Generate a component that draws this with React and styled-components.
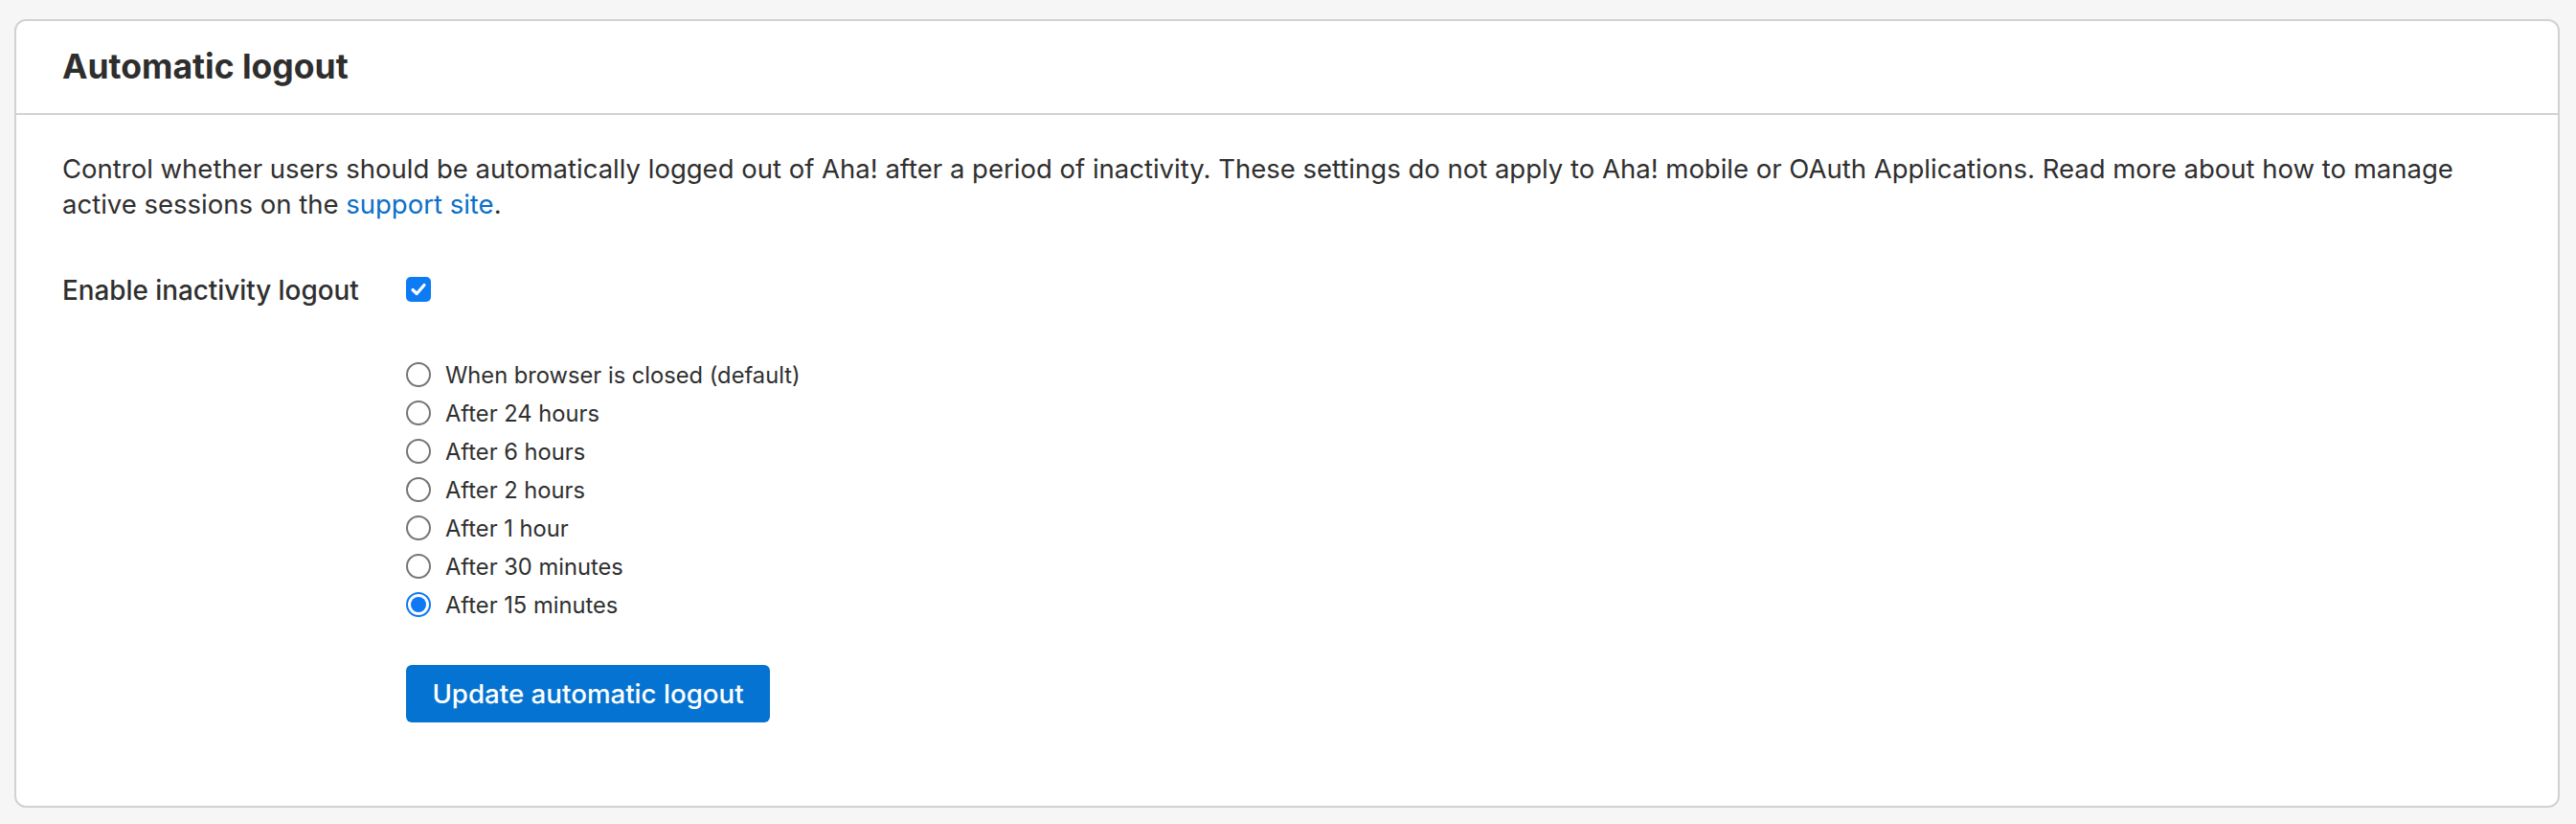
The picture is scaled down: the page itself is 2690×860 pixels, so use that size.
import React from "react";
import styled, { createGlobalStyle } from "styled-components";

const Global = createGlobalStyle`
  html, body { margin: 0; padding: 0; background: #f6f6f6; }
  body { font-family: Inter, "Noto Sans", sans-serif; color: #2f2f2f; }
  * { box-sizing: border-box; }
`;

const Page = styled.div`
  padding: 20px 17px 16px 15px;
`;

const Card = styled.section`
  background: #fff;
  border: 2px solid #d2d2d2;
  border-radius: 12px;
`;

const Header = styled.header`
  padding: 24px 48px;
  border-bottom: 2px solid #d2d2d2;
`;

const Title = styled.h2`
  margin: 0;
  font-size: 35.5px;
  line-height: 48px;
  font-weight: 700;
  color: #2e2e2e;
`;

const Body = styled.div`
  padding: 38px 48px 87px;
  display: flex;
  flex-direction: column;
`;

const Intro = styled.p`
  margin: 0;
  font-size: 27.5px;
  line-height: 37px;
  color: #2f2f2f;
`;

const Link = styled.a`
  color: #0b6fc8;
  text-decoration: none;
`;

const FieldRow = styled.div`
  display: grid;
  grid-template-columns: 359px 1fr;
  align-items: center;
  margin-top: ${(p) => p.$top || 0}px;
`;

const Label = styled.label`
  margin-top: 4px;
  font-size: 27.8px;
  line-height: 37px;
  font-weight: 500;
  color: #2f2f2f;
`;

const Checkbox = styled.span`
  width: 26px;
  height: 26px;
  border-radius: 5px;
  background: #0d7bf4;
  display: inline-flex;
  align-items: center;
  justify-content: center;
`;

const RadioList = styled.div`
  grid-column: 2;
  display: flex;
  flex-direction: column;
`;

const RadioRow = styled.label`
  display: flex;
  align-items: center;
  height: 40px;
  gap: 15px;
  font-size: 23.7px;
  color: #2f2f2f;
`;

const RadioCircle = styled.span`
  width: 26px;
  height: 26px;
  border-radius: 50%;
  border: 2px solid ${(p) => (p.$checked ? "#0f78f2" : "#767676")};
  display: inline-flex;
  align-items: center;
  justify-content: center;
  flex-shrink: 0;
  &::after {
    content: "";
    display: ${(p) => (p.$checked ? "block" : "none")};
    width: 16px;
    height: 16px;
    border-radius: 50%;
    background: #0f78f2;
  }
`;

const Button = styled.button`
  grid-column: 2;
  justify-self: start;
  height: 60px;
  width: 380px;
  padding: 0;
  border: none;
  border-radius: 6px;
  background: #0573d1;
  color: #fff;
  font-family: Inter, "Noto Sans", sans-serif;
  font-size: 27.7px;
  font-weight: 500;
  cursor: pointer;
`;

const options = [
  "When browser is closed (default)",
  "After 24 hours",
  "After 6 hours",
  "After 2 hours",
  "After 1 hour",
  "After 30 minutes",
  "After 15 minutes",
];

export default function App() {
  return (
    <>
      <Global />
      <Page>
        <Card>
          <Header>
            <Title>Automatic logout</Title>
          </Header>
          <Body>
            <Intro>
              Control whether users should be automatically logged out of Aha! after a period of
              inactivity. These settings do not apply to Aha! mobile or OAuth Applications. Read
              more about how to manage active sessions on the <Link href="#">support site</Link>.
            </Intro>
            <FieldRow $top={49}>
              <Label>Enable inactivity logout</Label>
              <Checkbox>
                <svg width="18" height="18" viewBox="0 0 18 18">
                  <path d="M3 9.5 L7.2 13.5 L15 4.5" fill="none" stroke="#fff" strokeWidth="3.2" strokeLinecap="round" strokeLinejoin="round" />
                </svg>
              </Checkbox>
            </FieldRow>
            <FieldRow $top={49}>
              <RadioList>
                {options.map((o, i) => (
                  <RadioRow key={o}>
                    <RadioCircle $checked={i === options.length - 1} />
                    {o}
                  </RadioRow>
                ))}
              </RadioList>
            </FieldRow>
            <FieldRow $top={43}>
              <Button>Update automatic logout</Button>
            </FieldRow>
          </Body>
        </Card>
      </Page>
    </>
  );
}
